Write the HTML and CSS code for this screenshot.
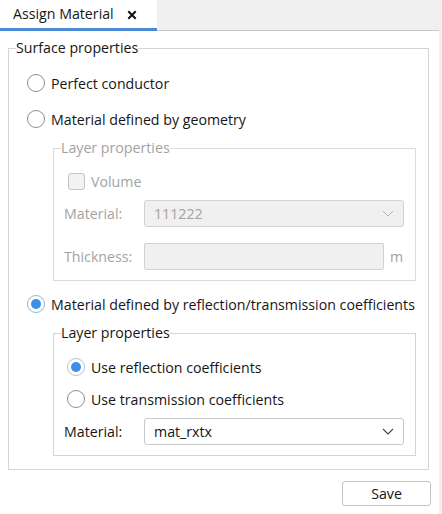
FILE: index.html
```html
<!DOCTYPE html>
<html>
<head>
<meta charset="utf-8">
<link rel="stylesheet" href="styles.css">
</head>
<body>
<div class="tabbar">
  <div class="tab">
    <span class="tab-title">Assign Material</span>
    <svg class="tab-close" width="10" height="10" viewBox="0 0 10 10"><path d="M2 2 L8 8 M8 2 L2 8" stroke="#111" stroke-width="2" stroke-linecap="square"/></svg>
  </div>
  <div class="tab-filler"></div>
</div>
<div class="main">
  <div class="panel">
    <fieldset class="group outer">
      <legend>Surface properties</legend>
      <div class="outer-body">
        <div class="row radio-row first"><span class="radio"></span><span>Perfect conductor</span></div>
        <div class="row radio-row"><span class="radio"></span><span>Material defined by geometry</span></div>
        <fieldset class="group inner disabled">
          <legend>Layer properties</legend>
          <div class="inner-body">
            <div class="row check-row"><span class="checkbox"></span><span>Volume</span></div>
            <div class="field-row sel1">
              <span class="label">Material:</span>
              <div class="select dis"><span>111222</span><svg width="12" height="7" viewBox="0 0 12 7"><path d="M1 1 L6 6 L11 1" fill="none" stroke="#b4b4b4" stroke-width="1"/></svg></div>
            </div>
            <div class="field-row thick">
              <span class="label">Thickness:</span>
              <div class="input dis"></div>
              <span class="unit">m</span>
            </div>
          </div>
        </fieldset>
        <div class="row radio-row third"><span class="radio checked focus"></span><span>Material defined by reflection/transmission coefficients</span></div>
        <fieldset class="group inner two">
          <legend>Layer properties</legend>
          <div class="inner-body">
            <div class="row radio-row r1"><span class="radio checked"></span><span>Use reflection coefficients</span></div>
            <div class="row radio-row r2"><span class="radio"></span><span>Use transmission coefficients</span></div>
            <div class="field-row sel2">
              <span class="label">Material:</span>
              <div class="select"><span>mat_rxtx</span><svg width="12" height="7" viewBox="0 0 12 7"><path d="M1 1 L6 6 L11 1" fill="none" stroke="#444" stroke-width="1.1"/></svg></div>
            </div>
          </div>
        </fieldset>
      </div>
    </fieldset>
    <div class="actions"><button class="btn">Save</button></div>
  </div>
  <div class="strip"></div>
</div>
</body>
</html>
```

FILE: styles.css
```css
* { box-sizing: border-box; }
html, body { margin: 0; padding: 0; background: #fff; }
body {
  font-family: "Open Sans", "Noto Sans", sans-serif;
  font-size: 14.2px;
  color: #161616;
  width: 442px;
  height: 514px;
  overflow: hidden;
}
.tabbar { display: flex; height: 31px; background: #f0f0f0; }
.tab {
  width: 157px; height: 31px; background: #fff;
  border-bottom: 3px solid #4a8ad4;
  display: flex; align-items: center;
  padding-left: 13px;
}
.tab-title { line-height: 20px; }
.tab-close { margin-left: 13px; margin-top: 1px; }
.tab-filler { width: 282px; height: 31px; border-bottom: 1px solid #c8c8c8; }
.main { display: flex; height: 483px; }
.panel { width: 439px; background: #fff; padding: 7px 0 0 8px; }
.strip { width: 3px; background: #f0f0f0; }

.group { margin: 0; padding: 0; border: 1px solid #d4d4d4; min-width: 0; }
.group legend { padding: 0; margin-left: 7px; line-height: 20px; }
.outer { width: 421px; }
.outer-body { padding: 0 0 13px 18px; }

.row { display: flex; align-items: center; height: 24px; white-space: nowrap; }
.radio-row .radio { margin-right: 6px; }
.first { margin-top: 13px; }
.radio-row + .radio-row { margin-top: 12px; }
.radio {
  width: 18px; height: 18px; border-radius: 50%;
  border: 1px solid #8f8f8f; background: #fff;
  flex: none; display: flex; align-items: center; justify-content: center;
}
.radio.checked { border-color: #b4c4d4; }
.radio.checked.focus { border-color: #8fb6e0; }
.radio.checked::after {
  content: ""; width: 10px; height: 10px; border-radius: 50%; background: #3d8ee6;
}

.inner { width: 363px; margin: 7px 0 0 26px; }
.inner-body { padding: 0 0 10px 0; }
.disabled { border-color: #dcdcdc; color: #a3a3a3; }
.check-row { margin-top: 11px; padding-left: 14px; }
.checkbox {
  width: 17px; height: 17px; border: 1px solid #c4c4c4; border-radius: 3px;
  background: #f2f2f2; margin-right: 6px; flex: none;
}
.field-row { display: flex; align-items: center; padding-left: 10px; }
.label { width: 80px; flex: none; }
.select {
  width: 260px; height: 27px; border: 1px solid #c8c8c8; border-radius: 3px;
  background: #fff; display: flex; align-items: center; justify-content: space-between;
  padding: 0 9px 0 9px;
}
.select.dis, .input.dis { background: #f0f0f0; border-color: #d2d2d2; }
.input { width: 240px; height: 27px; border: 1px solid #d2d2d2; border-radius: 2px; }
.unit { margin-left: 6px; }
.sel1 { margin-top: 7px; }
.thick { margin-top: 16px; }

.third { margin-top: 11px; }
.two .r1 { margin-top: 12px; padding-left: 13px; }
.two .r2 { margin-top: 8px; padding-left: 13px; }
.sel2 { margin-top: 7px; }

.actions { display: flex; justify-content: flex-end; padding-right: 8px; margin-top: 11px; }
.btn {
  width: 89px; height: 25px; font: inherit; color: #161616;
  background: #fff; border: 1px solid #c4c4c4; border-radius: 3px; padding: 0;
}
```
